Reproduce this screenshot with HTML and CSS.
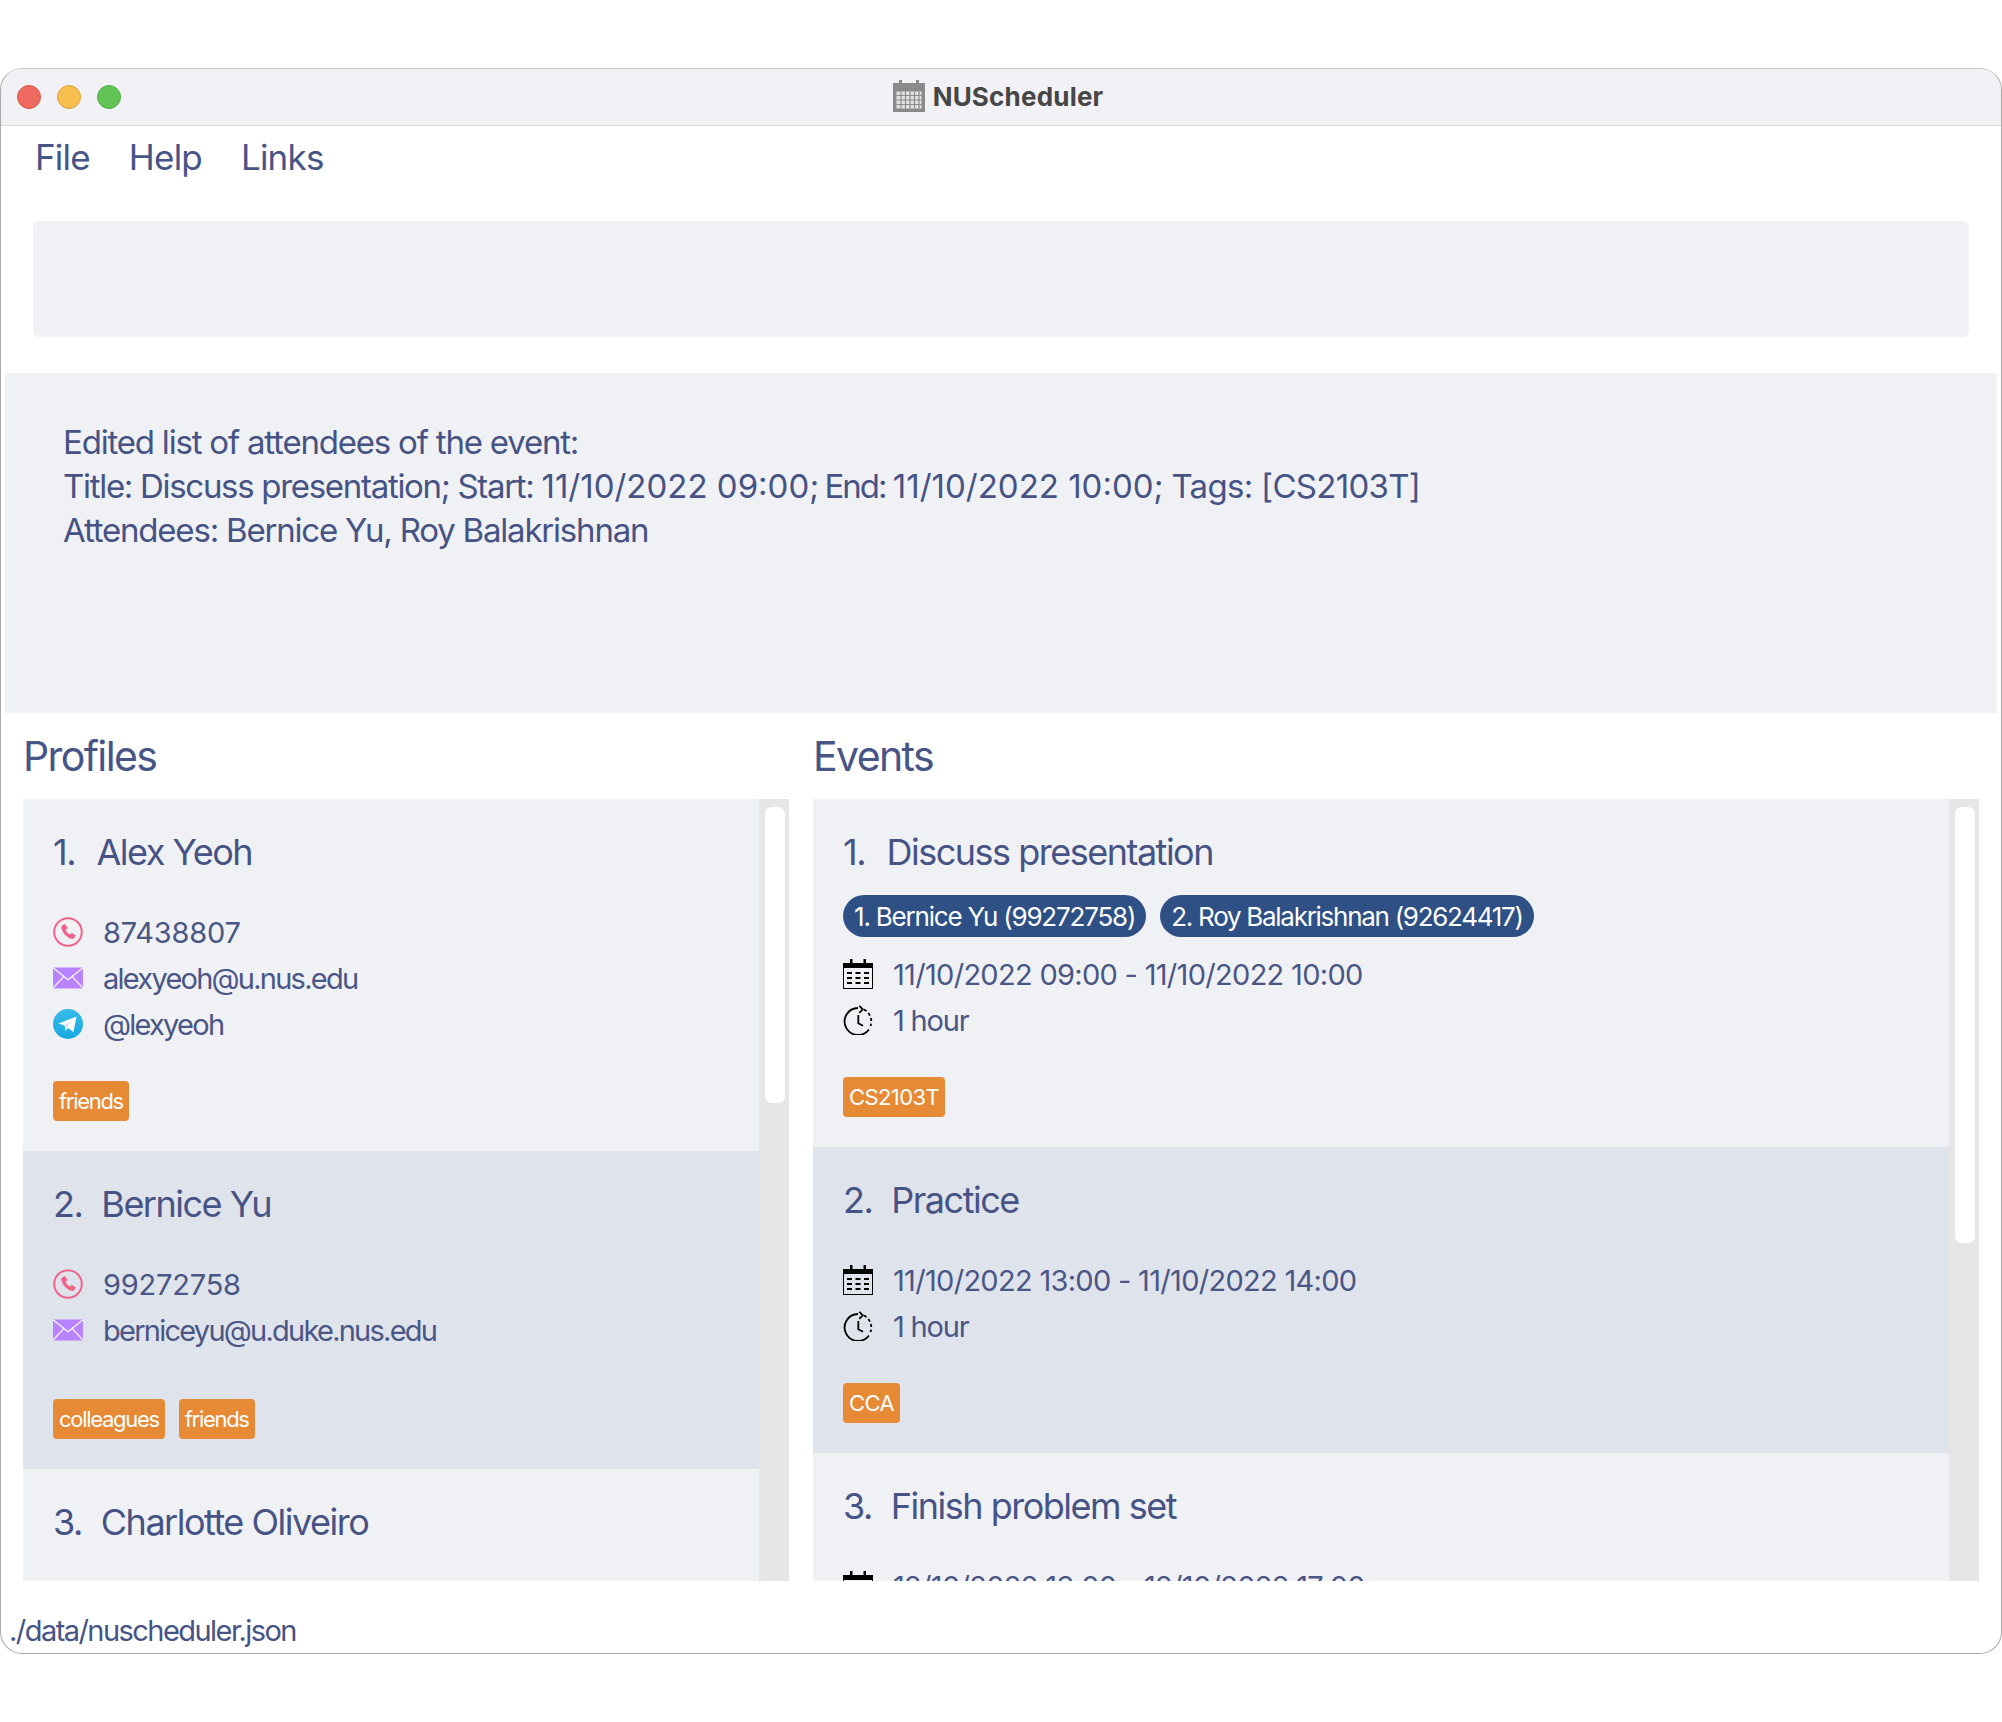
FILE: index.html
```html
<!DOCTYPE html>
<html lang="en">
<head>
<meta charset="utf-8">
<title>NUScheduler</title>
<link rel="stylesheet" href="styles.css">
</head>
<body>
<svg class="defs" aria-hidden="true">
  <defs>
    <symbol id="i-phone" viewBox="0 0 30 30">
      <circle cx="15" cy="15" r="13.8" fill="none" stroke="#f0648c" stroke-width="2"/>
      <path d="M9 8.5l3-1.5 2.6 4-1.8 1.8c.6 2 2 3.6 4.2 4.6l1.8-1.6 4 2.6-1.6 2.8c-.6.8-2 .9-3.6.4C13.600 20.400 10 16.500 8.400 11.600c-.3-1.200-.1-2.400.6-3.100z" fill="#f0648c"/>
    </symbol>
    <symbol id="i-mail" viewBox="0 0 30 22">
      <rect width="30" height="21" y=".5" fill="#b983ff"/>
      <path d="M0 .8l15 12 15-12M0 21l10.500-11.200M30 21L19.500 9.800" fill="none" stroke="#fff" stroke-width="1.100"/>
    </symbol>
    <symbol id="i-tele" viewBox="0 0 30 30">
      <circle cx="15" cy="15" r="15" fill="url(#teleg)"/>
      <path d="M5.500 14.500l18-7-3 15.500-5.500-4-2.500 2.500-.8-5z" fill="#fff"/>
      <path d="M11.700 16.500l9-7-7 9-1.200 4.500z" fill="#d2e6f2"/>
    </symbol>
    <symbol id="i-cal" viewBox="0 0 30 30">
      <path d="M7 0h2.500v4h11V0H23v4h7v5H0V4h7z" fill="#000"/>
      <rect x=".5" y="8.500" width="29" height="21" fill="none" stroke="#000"/>
      <path d="M4 13h5v2H4zm8.500 0h5v2h-5zM21 13h5v2h-5zM4 18h5v2H4zm8.500 0h5v2h-5zM21 18h5v2h-5zM4 23h5v2H4zm8.500 0h5v2h-5zM21 23h5v2h-5z" fill="#000"/>
    </symbol>
    <symbol id="i-clock" viewBox="0 0 30 30">
      <path d="M15 3A13.500 13.500 0 1 0 26 24.500" fill="none" stroke="#000" stroke-width="1.800"/>
      <path d="M21 4.500A13.500 13.500 0 0 1 27.500 21" fill="none" stroke="#000" stroke-width="1.800" stroke-dasharray="3 2.600"/>
      <path d="M16.300 .8l3.500 3.500-3.500 3.500M15.300 10v8.300l4.700 2.400" fill="none" stroke="#000" stroke-width="1.800"/>
    </symbol>
    <linearGradient id="teleg" x1="0" y1="0" x2="0" y2="1">
      <stop offset="0" stop-color="#37bbe7"/>
      <stop offset="1" stop-color="#17a9e2"/>
    </linearGradient>
  </defs>
</svg>
<main class="window">
  <header class="titlebar">
    <div class="lights">
      <span class="light red"></span>
      <span class="light yellow"></span>
      <span class="light green"></span>
    </div>
    <div class="wintitle">
      <svg class="appicon" viewBox="0 0 32 32">
        <path d="M6 0h3v3h14V0h3v3h6v29H0V3h6z" fill="#8a8a8a"/>
        <path d="M3.500 11.500h25v17h-25z" fill="#e3e3e3"/>
        <path d="M8 11.500v17M12.500 11.500v17M17 11.500v17M21.500 11.500v17M26 11.500v17M3.500 15.500h25M3.500 20h25M3.500 24.500h25" stroke="#8a8a8a" stroke-width="1.200"/>
      </svg>
      <span>NUScheduler</span>
    </div>
  </header>
  <nav class="menu">
    <span>File</span><span>Help</span><span>Links</span>
  </nav>
  <div class="command"></div>
  <section class="result">
    <p>Edited list of attendees of the event:</p>
    <p><span class="lead">Title: Discuss presentation; Start: </span><span class="num">11/10/2022 09:00</span><span class="tight">; End: </span><span class="num">11/10/2022 10:00</span><span class="loose">; Tags: [CS2103T]</span></p>
    <p>Attendees: Bernice Yu, Roy Balakrishnan</p>
  </section>
  <div class="panels">
    <section class="panel profiles">
      <h2>Profiles</h2>
      <div class="list">
        <div class="items">
          <article class="card c1">
            <h3><span>1.</span>Alex Yeoh</h3>
            <ul class="rows">
              <li><svg class="ic"><use href="#i-phone"/></svg><span class="phone">87438807</span></li>
              <li><svg class="ic mail"><use href="#i-mail"/></svg>alexyeoh@u.nus.edu</li>
              <li><svg class="ic"><use href="#i-tele"/></svg>@lexyeoh</li>
            </ul>
            <div class="tags"><span class="tag">friends</span></div>
          </article>
          <article class="card alt c2">
            <h3><span>2.</span>Bernice Yu</h3>
            <ul class="rows">
              <li><svg class="ic"><use href="#i-phone"/></svg><span class="phone">99272758</span></li>
              <li><svg class="ic mail"><use href="#i-mail"/></svg>berniceyu@u.duke.nus.edu</li>
            </ul>
            <div class="tags"><span class="tag">colleagues</span><span class="tag">friends</span></div>
          </article>
          <article class="card last">
            <h3><span>3.</span>Charlotte Oliveiro</h3>
          </article>
        </div>
        <div class="track"><div class="thumb thumb-p"></div></div>
      </div>
    </section>
    <section class="panel events">
      <h2>Events</h2>
      <div class="list">
        <div class="items">
          <article class="card e1">
            <h3><span>1.</span>Discuss presentation</h3>
            <div class="pills"><span class="pill">1. Bernice Yu (99272758)</span><span class="pill">2. Roy Balakrishnan (92624417)</span></div>
            <ul class="rows">
              <li><svg class="ic"><use href="#i-cal"/></svg><span class="date">11/10/2022 09:00 - 11/10/2022 10:00</span></li>
              <li><svg class="ic"><use href="#i-clock"/></svg><span class="hour">1 hour</span></li>
            </ul>
            <div class="tags"><span class="tag caps">CS2103T</span></div>
          </article>
          <article class="card alt e2">
            <h3><span>2.</span>Practice</h3>
            <ul class="rows">
              <li><svg class="ic"><use href="#i-cal"/></svg><span class="date">11/10/2022 13:00 - 11/10/2022 14:00</span></li>
              <li><svg class="ic"><use href="#i-clock"/></svg><span class="hour">1 hour</span></li>
            </ul>
            <div class="tags"><span class="tag caps">CCA</span></div>
          </article>
          <article class="card last">
            <h3><span>3.</span>Finish problem set</h3>
            <ul class="rows">
              <li><svg class="ic"><use href="#i-cal"/></svg><span class="date">12/10/2022 13:00 - 12/10/2022 17:00</span></li>
            </ul>
          </article>
        </div>
        <div class="track"><div class="thumb thumb-e"></div></div>
      </div>
    </section>
  </div>
  <footer class="status">./data/nuscheduler.json</footer>
</main>
</body>
</html>
```
FILE: styles.css
```css
* { box-sizing: border-box; }
html, body { margin: 0; padding: 0; background: #fff; }
body { height: 1722px; padding-top: 68px; overflow: hidden; font-family: Inter, "Liberation Sans", sans-serif; color: #465384; }
.defs { width: 0; height: 0; display: block; position: absolute; }
.window { width: 2002px; height: 1586px; border: 1px solid #a9a9a9; border-top-color: #c4c4c4; border-radius: 22px; overflow: hidden; display: flex; flex-direction: column; background: #fff; }
.titlebar { height: 57px; flex: none; background: #f2f1f5; border-bottom: 1px solid #d8d8d8; display: flex; align-items: center; justify-content: center; position: relative; }
.lights { position: absolute; left: 16px; top: 16px; display: flex; gap: 16px; }
.light { width: 24px; height: 24px; border-radius: 50%; border: 1px solid; }
.red { background: #ee6a5f; border-color: #d65a50; }
.yellow { background: #f5be4f; border-color: #d9a23f; }
.green { background: #61c454; border-color: #52ab47; }
.wintitle { display: flex; align-items: center; gap: 8px; font-size: 26px; font-weight: 700; letter-spacing: .2px; color: #464646; margin-right: 6px; padding-bottom: 2px; }
.appicon { width: 32px; height: 32px; }
.menu { height: 60px; flex: none; display: flex; gap: 39px; padding: 2px 0 0 34px; align-items: center; font-size: 35px; letter-spacing: -0.8px; color: #475486; }
.command { height: 116px; flex: none; margin: 35px 32px 0; background: #f0f1f5; border-radius: 6px; }
.result { height: 340px; flex: none; margin: 36px 4px 0 4px; padding: 47px 58px; background: #f0f1f5; font-size: 33px; line-height: 44px; letter-spacing: -1.2px; }
.result p { margin: 0; }
.result .lead { letter-spacing: -1.3px; }
.result .num { letter-spacing: 0; }
.result .tight { letter-spacing: -2px; }
.result .loose { letter-spacing: -0.7px; }
.panels { display: flex; flex: none; height: 868px; padding-left: 22px; }
.panel { display: flex; flex-direction: column; }
.profiles { width: 766px; }
.events { width: 1166px; margin-left: 24px; }
.panel h2 { margin: 0; height: 86px; flex: none; display: flex; align-items: center; font-size: 41px; font-weight: 400; letter-spacing: -1.6px; color: #475486; }
.list { height: 782px; display: flex; overflow: hidden; }
.items { flex: 1; min-width: 0; overflow: hidden; display: flex; flex-direction: column; }
.track { width: 30px; flex: none; background: #e6e6e6; padding: 8px 4px 0 6px; }
.thumb { background: #fff; border-radius: 7px; }
.thumb-p { height: 296px; }
.thumb-e { height: 436px; }
.card { background: #f0f1f5; padding: 30px 30px 30px; display: flex; flex-direction: column; flex: none; }
.alt { background: #dfe3eb; }
.last { flex: 1 0 auto; }
.c1 { height: 352px; }
.c2 { height: 318px; }
.e1 { height: 348px; }
.e2 { height: 306px; }
.card h3 { margin: 0; font-size: 36px; line-height: 46px; font-weight: 400; letter-spacing: -1.5px; color: #465384; display: flex; }
.card h3 span { margin-right: 19px; }
.c1 h3 span, .e1 h3 span { margin-right: 21.500px; }
.rows { list-style: none; margin: 34px 0 0; padding: 0; }
.rows li { height: 46px; display: flex; align-items: center; font-size: 29px; letter-spacing: -1.75px; color: #4a5685; }
.rows .phone { letter-spacing: -0.2px; }
.rows .date { letter-spacing: -0.7px; }
.rows .hour { letter-spacing: -1.2px; }
.ic { width: 30px; height: 30px; flex: none; margin-right: 20px; }
.ic.mail { height: 22px; }
.tags { display: flex; gap: 14px; margin-top: auto; }
.tag { height: 40px; display: flex; align-items: center; padding: 0 6px; background: #e68a36; color: #fff; font-size: 22px; letter-spacing: -1.3px; border-radius: 4px; }
.tag.caps { letter-spacing: -0.6px; }
.pills { display: flex; gap: 14px; margin-top: 20px; }
.pill { height: 42px; display: flex; align-items: center; padding: 0 11px; background: #2e5085; color: #fff; font-size: 26px; letter-spacing: -1.2px; border-radius: 21px; }
.pill + .pill { letter-spacing: -1.28px; }
.pills + .rows { margin-top: 14px; }
.status { flex: 1; display: flex; align-items: center; padding: 26px 0 0 8px; font-size: 29px; letter-spacing: -1.55px; color: #465384; }
```
